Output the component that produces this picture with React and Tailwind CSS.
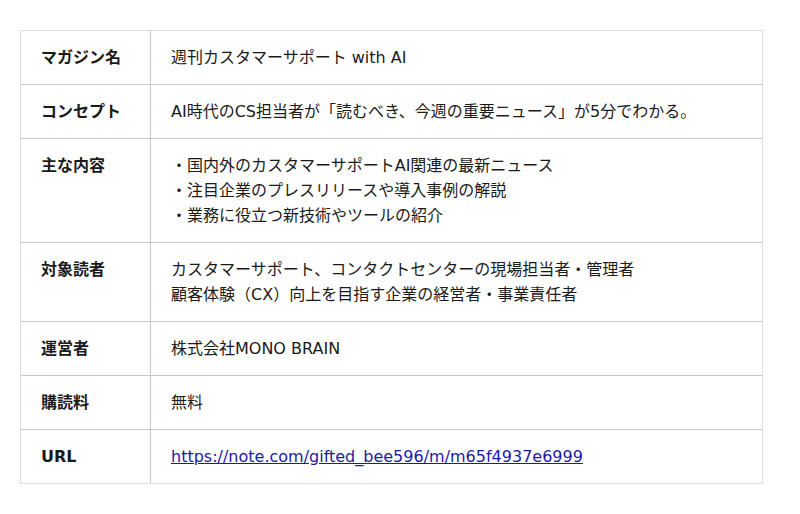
export default function App() {
  const rows = [
    { label: "マガジン名", content: ["週刊カスタマーサポート with AI"] },
    { label: "コンセプト", content: ["AI時代のCS担当者が「読むべき、今週の重要ニュース」が5分でわかる。"] },
    {
      label: "主な内容",
      content: [
        "・国内外のカスタマーサポートAI関連の最新ニュース",
        "・注目企業のプレスリリースや導入事例の解説",
        "・業務に役立つ新技術やツールの紹介",
      ],
    },
    {
      label: "対象読者",
      content: [
        "カスタマーサポート、コンタクトセンターの現場担当者・管理者",
        "顧客体験（CX）向上を目指す企業の経営者・事業責任者",
      ],
    },
    { label: "運営者", content: ["株式会社MONO BRAIN"] },
    { label: "購読料", content: ["無料"] },
    { label: "URL", link: "https://note.com/gifted_bee596/m/m65f4937e6999" },
  ];
  return (
    <div
      className="w-[800px] h-[514px] bg-white pt-[30px] pl-[20px] text-[16px] leading-[25px] text-[#1a1a1a]"
      style={{ fontFamily: '"DejaVu Sans", "Noto Sans CJK JP", sans-serif' }}
    >
      <div className="w-[743px] border border-[#dcdcdc] flex flex-col">
        {rows.map((r, i) => (
          <div
            key={i}
            className={`flex ${i > 0 ? "border-t border-[#c8c8c8]" : ""}`}
          >
            <div className="w-[130px] shrink-0 border-r border-[#c8c8c8] py-[14px] pl-[20px] font-bold">
              {r.label}
            </div>
            <div className="flex-1 py-[14px] pl-[20px]">
              {r.link ? (
                <a href="#" className="text-[#1a1aa6] underline">
                  {r.link}
                </a>
              ) : (
                r.content.map((c, j) => <div key={j}>{c}</div>)
              )}
            </div>
          </div>
        ))}
      </div>
    </div>
  );
}
